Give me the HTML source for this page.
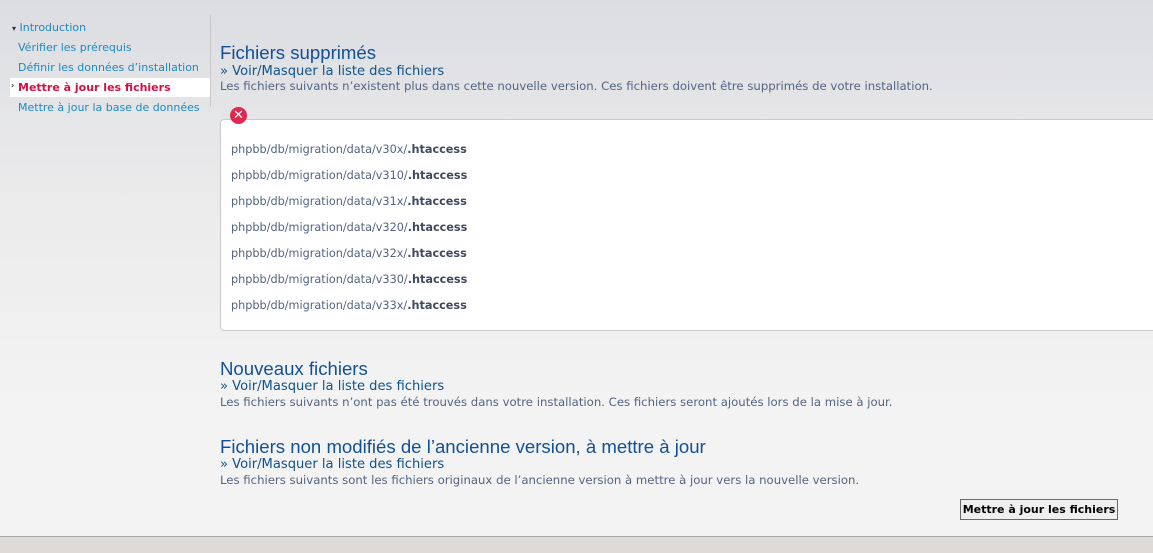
<!DOCTYPE html>
<html><head><meta charset="utf-8"><style>
*{margin:0;padding:0;box-sizing:border-box}
body{width:1153px;height:553px;overflow:hidden;font-family:"DejaVu Sans","Liberation Sans",sans-serif;background:#dedbd6;position:relative}
#main{position:absolute;left:0;top:0;width:1153px;height:537px;background:linear-gradient(#dcdde1 0px,#ebebec 200px,#f3f3f3 400px,#f3f3f3);border-bottom:1px solid #a8a8a8}
.a{position:absolute;white-space:nowrap}
.nav{font-size:11px;color:#1b8bc2;left:18px}
.sep{position:absolute;left:210px;top:15px;width:1px;height:92px;background:#c8c8cc}
.h{font-family:"Liberation Sans",sans-serif;font-size:18.6px;color:#115098;left:220px}
.t{font-size:13.1px;color:#105289;left:220px}
.d{font-size:11.7px;color:#536482;left:220px}
.f{font-size:11.25px;color:#536482;left:231px}
.f b{color:#3f4a5f}
#box{position:absolute;left:220px;top:119px;width:945px;height:212px;background:#fff;border:1px solid #c9c9c9;border-radius:4px}
.x{position:absolute;left:230px;top:107px;width:17px;height:17px;border-radius:50%;background:#e0274e;color:#fff;font:bold 13px/17px "DejaVu Sans",sans-serif;text-align:center}
#btn{position:absolute;left:960px;top:499px;width:158px;height:21px;border:1px solid #6a6a6a;background:#efefef;font:bold 11px/19px "DejaVu Sans",sans-serif;color:#000;text-align:center}
</style></head><body>
<div id="main">
<div class="a nav" style="left:12px;top:21px;color:#1b8bc2"><span style="font-size:8px;color:#333">▾</span> Introduction</div>
<div class="a nav" style="top:41px">Vérifier les prérequis</div>
<div class="a nav" style="top:61px">Définir les données d’installation</div>
<div style="position:absolute;left:10px;top:78px;width:200px;height:19px;background:#fff"></div>
<div class="a nav" style="top:81px;color:#d31141;font-weight:bold"><span style="position:absolute;left:-7px;top:0;font-size:8px;color:#333">›</span>Mettre à jour les fichiers</div>
<div class="a nav" style="top:101px">Mettre à jour la base de données</div>
<div class="sep"></div>

<div class="a h" style="top:42px">Fichiers supprimés</div>
<div class="a t" style="top:64px">» Voir/Masquer la liste des fichiers</div>
<div class="a d" style="top:79px">Les fichiers suivants n’existent plus dans cette nouvelle version. Ces fichiers doivent être supprimés de votre installation.</div>
<div id="box"></div>
<div class="x">✕</div>
<div class="a f" style="top:143px">phpbb/db/migration/data/v30x/<b>.htaccess</b></div>
<div class="a f" style="top:169px">phpbb/db/migration/data/v310/<b>.htaccess</b></div>
<div class="a f" style="top:195px">phpbb/db/migration/data/v31x/<b>.htaccess</b></div>
<div class="a f" style="top:221px">phpbb/db/migration/data/v320/<b>.htaccess</b></div>
<div class="a f" style="top:247px">phpbb/db/migration/data/v32x/<b>.htaccess</b></div>
<div class="a f" style="top:273px">phpbb/db/migration/data/v330/<b>.htaccess</b></div>
<div class="a f" style="top:299px">phpbb/db/migration/data/v33x/<b>.htaccess</b></div>

<div class="a h" style="top:358px">Nouveaux fichiers</div>
<div class="a t" style="top:379px">» Voir/Masquer la liste des fichiers</div>
<div class="a d" style="top:395px">Les fichiers suivants n’ont pas été trouvés dans votre installation. Ces fichiers seront ajoutés lors de la mise à jour.</div>

<div class="a h" style="top:436px">Fichiers non modifiés de l’ancienne version, à mettre à jour</div>
<div class="a t" style="top:457px">» Voir/Masquer la liste des fichiers</div>
<div class="a d" style="top:473px">Les fichiers suivants sont les fichiers originaux de l’ancienne version à mettre à jour vers la nouvelle version.</div>

<div id="btn">Mettre à jour les fichiers</div>
</div>
</body></html>
